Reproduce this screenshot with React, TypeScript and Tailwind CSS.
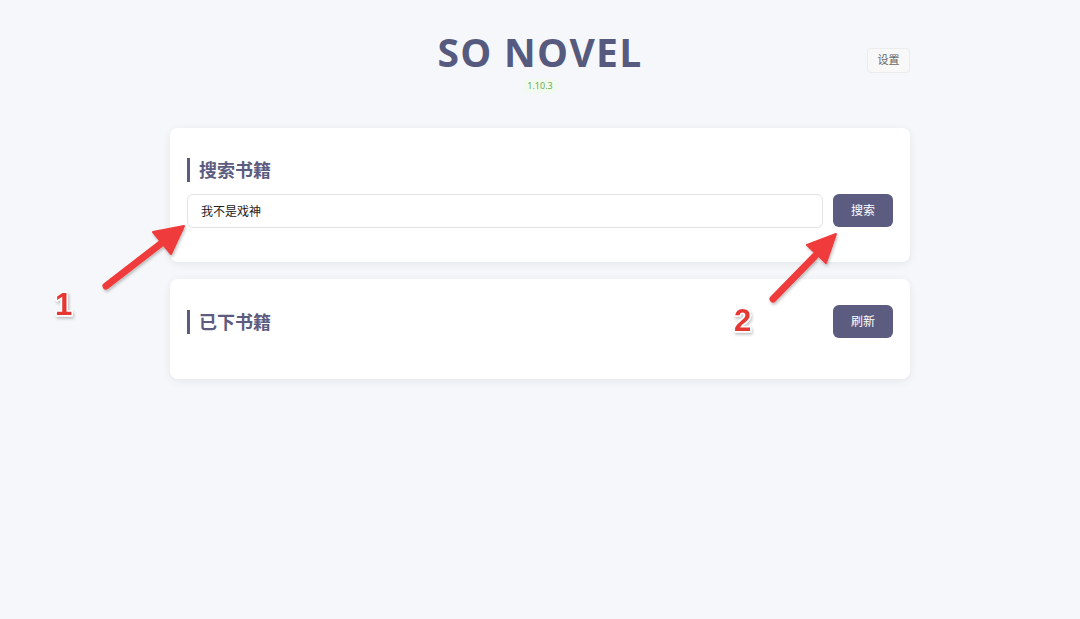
import React from 'react';

function Card({ children, className = '' }: { children: React.ReactNode; className?: string }) {
  return (
    <div className={`rounded-lg bg-white shadow-[0_2px_10px_rgba(0,0,0,0.07)] ${className}`}>{children}</div>
  );
}

function SectionTitle({ text }: { text: string }) {
  return (
    <div className="flex items-center">
      <span className="h-[24px] w-[3px] bg-[#5c5b80]" />
      <h2 className="ml-[9px] text-[18px] font-bold leading-[24px] text-[#5c5b80]">{text}</h2>
    </div>
  );
}

// red arrows + numbers drawn on top of the screenshot
function Annotations() {
  return (
    <svg className="pointer-events-none absolute left-0 top-0" width="1080" height="619">
      <defs>
        <filter id="sh" x="-20%" y="-20%" width="140%" height="140%">
          <feDropShadow dx="1" dy="2" stdDeviation="1.5" floodColor="#000" floodOpacity="0.25" />
        </filter>
      </defs>
      <g filter="url(#sh)" fill="#ef3b3b" stroke="#ef3b3b">
        <line x1="106" y1="286" x2="163" y2="242" strokeWidth="7" strokeLinecap="round" />
        <polygon points="184,226 171,254 153,232" strokeWidth="2" strokeLinejoin="round" />
        <line x1="773" y1="299" x2="815" y2="256" strokeWidth="7" strokeLinecap="round" />
        <polygon points="836,234 826,263 807,245" strokeWidth="2" strokeLinejoin="round" />
      </g>
      <g filter="url(#sh)" fontFamily="'Liberation Sans', Arial, sans-serif" fontSize="31" fontWeight="bold" fill="#e53935" stroke="#fff" strokeWidth="3" paintOrder="stroke" strokeLinejoin="round">
        <text x="55" y="315">1</text>
        <text x="734" y="331">2</text>
      </g>
    </svg>
  );
}

export default function App() {
  return (
    <div className="relative h-[619px] w-[1080px] overflow-hidden bg-[#f6f7fa] font-['Noto_Sans','Noto_Sans_CJK_SC',sans-serif]">
      <header className="relative pt-[28px]">
        <h1 className="text-center font-['Open_Sans','Noto_Sans',sans-serif] text-[39px] font-bold leading-[48px] tracking-[1.3px] text-[#565a7e]">
          SO NOVEL
        </h1>
        <div className="mt-[3px] flex justify-center">
          <span className="rounded px-1 text-[9px] leading-[14px] text-[#67b04a] bg-[#f2f9ee]">1.10.3</span>
        </div>
        <button className="absolute left-[867px] top-[48px] h-[25px] w-[43px] rounded border border-[#ececec] bg-[#f8f8f9] text-[11px] text-[#666]">
          设置
        </button>
      </header>

      <main className="mx-auto mt-[35px] flex w-[740px] flex-col gap-[17px]">
        <Card className="px-[17px] pb-[34px] pt-[30px]">
          <SectionTitle text="搜索书籍" />
          <div className="mt-[12px] flex gap-[10px]">
            <input
              readOnly
              value="我不是戏神"
              className="h-[34px] flex-1 rounded-md border border-[#e2e2e6] px-[13px] text-[12px] text-[#222] outline-none"
            />
            <button className="h-[33px] w-[60px] rounded-md bg-[#5c5b80] text-[12px] text-white">搜索</button>
          </div>
        </Card>

        <Card className="px-[17px] pb-[41px] pt-[26px]">
          <div className="flex items-center justify-between">
            <SectionTitle text="已下书籍" />
            <button className="h-[33px] w-[60px] rounded-md bg-[#5c5b80] text-[12px] text-white">刷新</button>
          </div>
        </Card>
      </main>

      <Annotations />
    </div>
  );
}
